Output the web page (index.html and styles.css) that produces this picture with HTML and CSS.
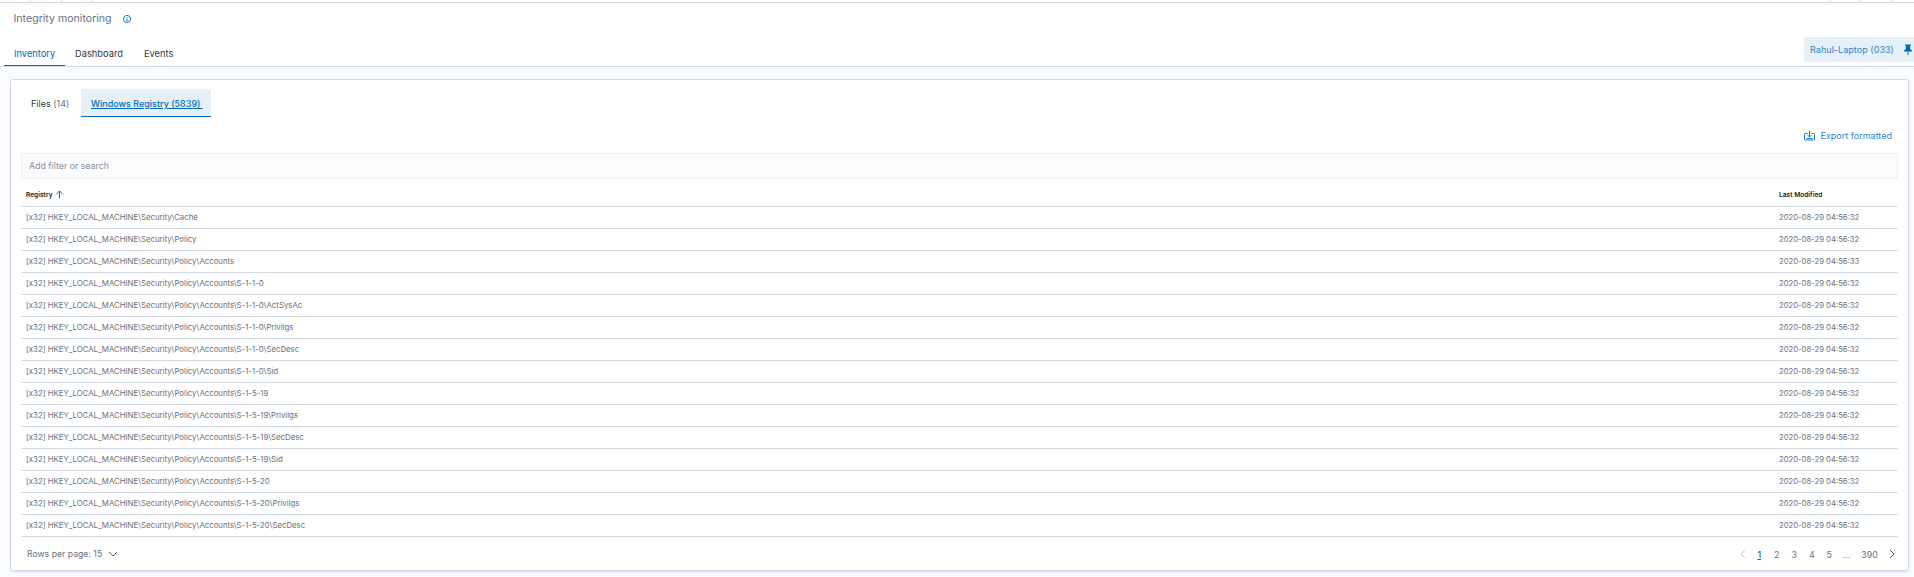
FILE: index.html
```html
<!DOCTYPE html>
<html lang="en">
<head>
    <meta charset="UTF-8">
    <title>Integrity monitoring</title>
    <link rel="stylesheet" href="styles.css">
</head>
<body>
    <div class="topstrip">
        <div class="strip-group"><span></span><span></span><span></span></div>
        <div class="strip-group strip-right"><span></span><span></span><span></span></div>
    </div>
    <header class="page-header">
        <div class="title-row">
            <span class="title">Integrity monitoring</span>
            <svg class="info-icon" width="10" height="10" viewBox="0 0 10 10"><circle cx="5" cy="5" r="3.6" fill="none" stroke="#006bb4" stroke-width="0.9"/><path d="M5 3v.8M4.300 4.600H5v2M4.200 6.800h1.600" fill="none" stroke="#006bb4" stroke-width="0.8"/></svg>
        </div>
        <div class="tab-row">
            <nav class="tabs">
                <a class="tab active">Inventory</a>
                <a class="tab">Dashboard</a>
                <a class="tab events">Events</a>
            </nav>
            <div class="agent">
                <span>Rahul-Laptop (033)</span>
                <svg width="10" height="11" viewBox="0 0 10 11"><path d="M2 0.500h6v1H7.200v3.400L9 6.600v.9H5.500V11h-1V7.500H1v-.9l1.800-1.700V1.500H2z" fill="#006bb4"/></svg>
            </div>
        </div>
    </header>
    <main class="content">
        <section class="panel">
            <div class="subtabs">
                <a class="subtab">Files <span class="count">(14)</span></a>
                <a class="subtab active">Windows Registry (5839)&nbsp;</a>
            </div>
            <div class="export-row">
                <a class="export">
                    <svg width="11" height="11" viewBox="0 0 11 11"><path d="M3.500 3.500H1.500a1 1 0 0 0-1 1v4.500a1 1 0 0 0 1 1h8a1 1 0 0 0 1-1V4.500a1 1 0 0 0-1-1H7.500M5.500 .5v6.500M3.500 5l2 2 2-2M2.500 8.500h6" fill="none" stroke="#006bb4" stroke-width="0.9"/></svg>
                    <span>Export formatted</span>
                </a>
            </div>
            <div class="filter">Add filter or search</div>
            <table class="grid">
                <thead>
                    <tr>
                        <th>Registry <svg class="sort" width="9" height="9" viewBox="0 0 9 9"><path d="M4.500 8.500V1M1 4.500l3.500-3.500 3.500 3.500" fill="none" stroke="#343741" stroke-width="0.8"/></svg></th>
                        <th class="date">Last Modified</th>
                    </tr>
                </thead>
                <tbody>
                    <tr><td>[x32] HKEY_LOCAL_MACHINE\Security\Cache</td><td class="date">2020-08-29 04:56:32</td></tr>
                    <tr><td>[x32] HKEY_LOCAL_MACHINE\Security\Policy</td><td class="date">2020-08-29 04:56:32</td></tr>
                    <tr><td>[x32] HKEY_LOCAL_MACHINE\Security\Policy\Accounts</td><td class="date">2020-08-29 04:56:33</td></tr>
                    <tr><td>[x32] HKEY_LOCAL_MACHINE\Security\Policy\Accounts\S-1-1-0</td><td class="date">2020-08-29 04:56:32</td></tr>
                    <tr><td>[x32] HKEY_LOCAL_MACHINE\Security\Policy\Accounts\S-1-1-0\ActSysAc</td><td class="date">2020-08-29 04:56:32</td></tr>
                    <tr><td>[x32] HKEY_LOCAL_MACHINE\Security\Policy\Accounts\S-1-1-0\Privilgs</td><td class="date">2020-08-29 04:56:32</td></tr>
                    <tr><td>[x32] HKEY_LOCAL_MACHINE\Security\Policy\Accounts\S-1-1-0\SecDesc</td><td class="date">2020-08-29 04:56:32</td></tr>
                    <tr><td>[x32] HKEY_LOCAL_MACHINE\Security\Policy\Accounts\S-1-1-0\Sid</td><td class="date">2020-08-29 04:56:32</td></tr>
                    <tr><td>[x32] HKEY_LOCAL_MACHINE\Security\Policy\Accounts\S-1-5-19</td><td class="date">2020-08-29 04:56:32</td></tr>
                    <tr><td>[x32] HKEY_LOCAL_MACHINE\Security\Policy\Accounts\S-1-5-19\Privilgs</td><td class="date">2020-08-29 04:56:32</td></tr>
                    <tr><td>[x32] HKEY_LOCAL_MACHINE\Security\Policy\Accounts\S-1-5-19\SecDesc</td><td class="date">2020-08-29 04:56:32</td></tr>
                    <tr><td>[x32] HKEY_LOCAL_MACHINE\Security\Policy\Accounts\S-1-5-19\Sid</td><td class="date">2020-08-29 04:56:32</td></tr>
                    <tr><td>[x32] HKEY_LOCAL_MACHINE\Security\Policy\Accounts\S-1-5-20</td><td class="date">2020-08-29 04:56:32</td></tr>
                    <tr><td>[x32] HKEY_LOCAL_MACHINE\Security\Policy\Accounts\S-1-5-20\Privilgs</td><td class="date">2020-08-29 04:56:32</td></tr>
                    <tr><td>[x32] HKEY_LOCAL_MACHINE\Security\Policy\Accounts\S-1-5-20\SecDesc</td><td class="date">2020-08-29 04:56:32</td></tr>
                </tbody>
            </table>
            <div class="table-footer">
                <div class="rows-per-page">
                    <span>Rows per page: 15</span>
                    <svg width="10" height="6" viewBox="0 0 10 6"><path d="M1 1l4 4 4-4" fill="none" stroke="#343741" stroke-width="0.8"/></svg>
                </div>
                <div class="pager">
                    <svg width="6" height="10" viewBox="0 0 6 10"><path d="M5 1L1 5l4 4" fill="none" stroke="#c2c3c6" stroke-width="0.9"/></svg>
                    <a class="page current">1</a>
                    <a class="page">2</a>
                    <a class="page">3</a>
                    <a class="page">4</a>
                    <a class="page">5</a>
                    <span class="dots">...</span>
                    <a class="page last">390</a>
                    <svg class="next" width="6" height="10" viewBox="0 0 6 10"><path d="M1 1l4 4-4 4" fill="none" stroke="#343741" stroke-width="0.9"/></svg>
                </div>
            </div>
        </section>
    </main>
</body>
</html>
```

FILE: styles.css
```css
* {
    box-sizing: border-box;
}
html, body {
    height: 100%;
}
body {
    margin: 0;
    background: #fafbfd;
    color: #343741;
    font-family: Inter, "Liberation Sans", sans-serif;
    overflow: hidden;
}
.topstrip {
    height: 3px;
    display: flex;
    justify-content: space-between;
    background: #fff;
    border-bottom: 1px solid #d3dae6;
}
.strip-group {
    display: flex;
    padding-left: 30px;
}
.strip-group span {
    width: 30.500px;
    height: 2px;
    border-left: 1px solid #d3dae6;
}
.strip-right {
    padding-left: 0;
    margin-right: -7px;
}
.page-header {
    height: 64px;
    background: #fff;
    border-bottom: 1px solid #d3dae6;
    display: flex;
    flex-direction: column;
}
.title-row {
    display: flex;
    align-items: center;
    gap: 10px;
    padding: 1px 0 0 13.500px;
    height: 30px;
}
.title {
    font-size: 10.600px;
    color: #69707d;
}
.tab-row {
    flex: 1;
    display: flex;
    justify-content: space-between;
    align-items: flex-end;
}
.tabs {
    display: flex;
    padding-left: 4px;
    height: 30px;
}
.tab {
    font-size: 9.300px;
    padding: 12px 10px 0;
    color: #343741;
    height: 30px;
}
.tab.active {
    color: #006bb4;
    border-bottom: 1px solid #006bb4;
    width: 61px;
}
.tab.events {
    margin-left: 1px;
}
.agent {
    width: 110px;
    height: 25px;
    margin-bottom: 4px;
    background: #e6f0f8;
    color: #2f86c4;
    font-size: 9.100px;
    white-space: nowrap;
    display: flex;
    align-items: center;
    justify-content: space-between;
    padding: 0 1px 0 6px;
}
.content {
    padding: 12px 5px 0 10px;
}
.panel {
    height: 492px;
    background: #fff;
    border: 1px solid #d3dae6;
    border-radius: 2px;
    box-shadow: 0 2px 2px -1px rgba(152,162,179,0.3), 0 1px 5px -2px rgba(152,162,179,0.3);
    padding: 9px 10px 0;
}
.subtabs {
    display: flex;
    height: 28px;
}
.subtab {
    font-size: 9px;
    padding: 9px 10px 0;
    height: 28px;
    width: 60px;
    color: #343741;
    white-space: nowrap;
}
.subtab .count {
    color: #69707d;
}
.subtab.active {
    width: 130px;
    background: #e6f0f8;
    color: #006bb4;
    font-weight: 500;
    text-decoration: underline;
    border-bottom: 1px solid #006bb4;
}
.export-row {
    height: 36px;
    display: flex;
    justify-content: flex-end;
    align-items: flex-end;
    padding: 0 6px 12px 0;
}
.export {
    display: flex;
    align-items: center;
    gap: 5px;
    font-size: 9px;
    color: #2f86c4;
}
.filter {
    height: 26px;
    background: #fafbfd;
    border: 1px solid #eef0f5;
    font-size: 8.800px;
    color: #8a919e;
    padding: 6px 7px;
}
.grid {
    width: 100%;
    border-collapse: collapse;
    table-layout: fixed;
}
.grid th {
    height: 27px;
    text-align: left;
    font-size: 6.600px;
    font-weight: 600;
    padding: 5px 0 0 5px;
    color: #1a1c21;
    border-bottom: 1px solid #d3dae6;
}
.grid td {
    height: 22px;
    font-size: 7.800px;
    padding: 0 0 0 5px;
    color: #69707d;
    border-bottom: 1px solid #d3dae6;
    white-space: nowrap;
}
.grid .date {
    width: 124px;
}
.grid td.date {
    font-size: 7.700px;
}
.sort {
    vertical-align: -2px;
    margin-left: 1px;
}
.table-footer {
    display: flex;
    justify-content: space-between;
    align-items: center;
    padding: 12px 3px 0 6px;
}
.rows-per-page {
    display: flex;
    align-items: center;
    gap: 6px;
    font-size: 8.700px;
    color: #69707d;
}
.pager {
    display: flex;
    align-items: center;
    font-size: 8.800px;
    color: #69707d;
}
.page {
    width: 17.500px;
    text-align: center;
}
.page.current {
    color: #006bb4;
    text-decoration: underline;
    font-weight: 500;
    margin-left: 5px;
}
.dots {
    width: 17px;
    text-align: center;
    color: #98a2b3;
}
.page.last {
    width: 29px;
}
.next {
    margin-left: 5px;
}
```
